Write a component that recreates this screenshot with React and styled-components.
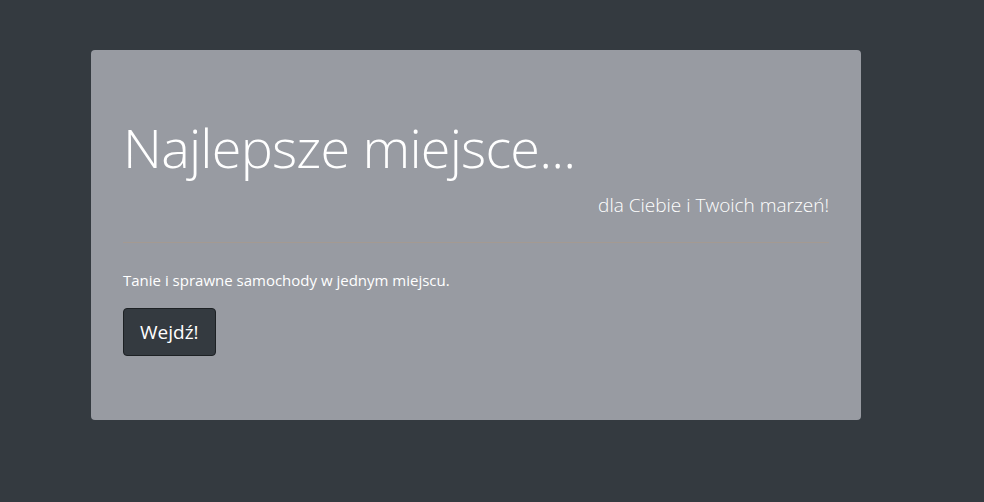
import React from "react"
import styled, { createGlobalStyle } from "styled-components"

const GlobalStyle = createGlobalStyle`
    body {
        margin: 0;
        background: #343a40;
        font-family: "Open Sans", "Noto Sans", sans-serif;
    }
`;

const Page = styled.div`
    min-height: 502px;
    padding: 50px 0 0 91px;
    box-sizing: border-box;`;

const Jumbotron = styled.section`
    width: 770px;
    box-sizing: border-box;
    padding: 64px 32px;
    background: #989ba2;
    border-radius: 4px;
    color: #fff;`;

const Title = styled.h1`
    margin: 0;
    font-size: 54px;
    font-weight: 300;
    line-height: 67px;
    letter-spacing: -0.8px;`;

const Lead = styled.p`
    margin: 0;
    text-align: right;
    font-size: 19px;
    font-weight: 300;
    line-height: 30px;
    padding-top: 9px;`;

const Divider = styled.hr`
    margin: 22px 0 25px;
    border: 0;
    border-top: 1px solid rgba(200, 150, 100, 0.25);`;

const Text = styled.p`
    margin: 0 0 16px;
    font-size: 15px;
    line-height: 24px;`;

const Button = styled.button`
    font-family: inherit;
    font-size: 19px;
    line-height: 30px;
    padding: 8px 16px;
    color: #fff;
    background: #343a40;
    border: 1px solid #1d2124;
    border-radius: 4px;
    cursor: pointer;`;

const App = () => {
    return (
        <Page>
            <GlobalStyle />
            <Jumbotron>
                <Title>Najlepsze miejsce...</Title>
                <Lead>dla Ciebie i Twoich marzeń!</Lead>
                <Divider />
                <Text>Tanie i sprawne samochody w jednym miejscu.</Text>
                <Button>Wejdź!</Button>
            </Jumbotron>
        </Page>
    )
}
export default App
